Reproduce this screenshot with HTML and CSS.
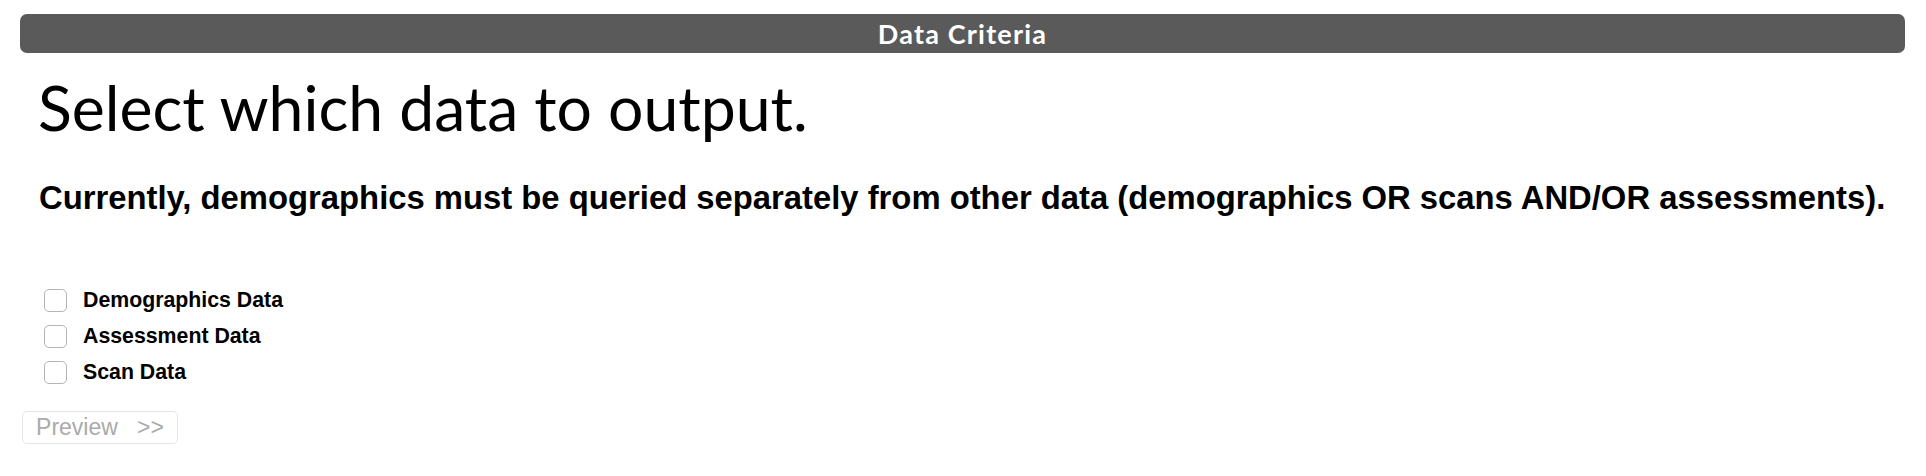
FILE: index.html
```html
<!DOCTYPE html>
<html lang="en">
<head>
    <meta charset="UTF-8">
    <title>Data Criteria</title>
    <link rel="stylesheet" href="styles.css">
</head>
<body>
<!-- header bar -->
<div class="panel-title">Data Criteria</div>

<div class="panel-body">
    <h1>Select which data to output.</h1>
    <h3>Currently, demographics must be queried separately from other data (demographics OR scans AND/OR assessments).</h3>

    <ul class="options">
        <li><label><input type="checkbox"><span class="box"></span>Demographics Data</label></li>
        <li><label><input type="checkbox"><span class="box"></span>Assessment Data</label></li>
        <li><label><input type="checkbox"><span class="box"></span>Scan Data</label></li>
    </ul>

    <button class="btn-preview" disabled>Preview&nbsp;&nbsp;&nbsp;&gt;&gt;</button>
</div>
</body>
</html>
```

FILE: styles.css
```css
/* page */
html, body {
    margin: 0;
    background: #fff;
}

body {
    padding: 14px 21px 0 20px;
    font-family: "Liberation Sans", Arial, sans-serif;
    color: #000;
}

/* header bar */
.panel-title {
    height: 39px;
    line-height: 39px;
    background: #5a5a5a;
    border-radius: 7px;
    color: #fff;
    text-align: center;
    font-family: Lato, "Open Sans", sans-serif;
    font-weight: bold;
    font-size: 27px;
    letter-spacing: 1.2px;
}

.panel-body {
    padding: 0 0 0 2px;
}

h1 {
    margin: 14px 0 0 16px;
    font-family: Lato, "Open Sans", sans-serif;
    font-weight: normal;
    font-size: 62.5px;
    line-height: 80px;
}

h3 {
    margin: 31px 0 0 17px;
    font-size: 32.8px;
    font-weight: bold;
    line-height: 40px;
}

/* checkbox list */
.options {
    list-style: none;
    margin: 70px 0 0 22px;
    padding: 0;
}

.options li {
    height: 36px;
}

.options label {
    display: flex;
    align-items: center;
    gap: 16px;
    font-size: 21.3px;
    font-weight: bold;
    height: 24px;
}

.options input {
    display: none;
}

.options .box {
    width: 21px;
    height: 21px;
    border: 1px solid #b4b4b4;
    border-radius: 5px;
    background: #fff;
}

/* preview button */
.btn-preview {
    margin-top: 15px;
    width: 156px;
    height: 33px;
    padding: 0;
    background: #fff;
    border: 1px solid #e6e6e6;
    border-radius: 5px;
    color: #aaa;
    font-family: "Liberation Sans", Arial, sans-serif;
    font-size: 23px;
}
```
